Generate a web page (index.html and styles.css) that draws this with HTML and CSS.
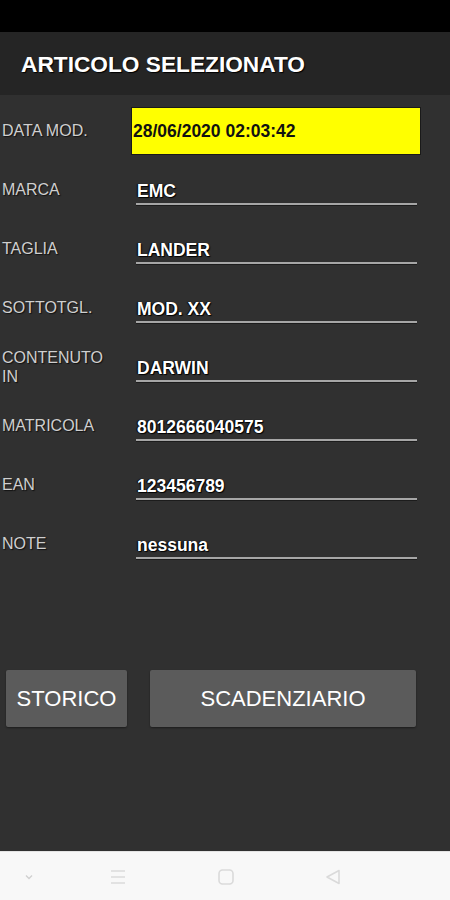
FILE: index.html
```html
<!DOCTYPE html>
<html lang="it">
<head>
    <meta charset="UTF-8">
    <title>Articolo selezionato</title>
    <link rel="stylesheet" href="styles.css">
</head>
<body>
    <div class="status-bar"></div>
    <div class="app-header">ARTICOLO SELEZIONATO</div>

    <div class="content">
        <div class="row">
            <div class="label">DATA MOD.</div>
            <div class="date-box">28/06/2020 02:03:42</div>
        </div>
        <div class="row">
            <div class="label">MARCA</div>
            <div class="field">EMC</div>
        </div>
        <div class="row">
            <div class="label">TAGLIA</div>
            <div class="field">LANDER</div>
        </div>
        <div class="row">
            <div class="label">SOTTOTGL.</div>
            <div class="field">MOD. XX</div>
        </div>
        <div class="row">
            <div class="label">CONTENUTO IN</div>
            <div class="field">DARWIN</div>
        </div>
        <div class="row">
            <div class="label">MATRICOLA</div>
            <div class="field">8012666040575</div>
        </div>
        <div class="row">
            <div class="label">EAN</div>
            <div class="field">123456789</div>
        </div>
        <div class="row">
            <div class="label">NOTE</div>
            <div class="field">nessuna</div>
        </div>

        <div class="buttons">
            <button class="btn btn-storico">STORICO</button>
            <button class="btn btn-scad">SCADENZIARIO</button>
        </div>
    </div>

    <div class="nav-bar">
        <svg class="nav-icon" width="12" height="12" viewBox="0 0 12 12">
            <path d="M3 4.5 L6 7.5 L9 4.5" fill="none" stroke="#d0d0d0" stroke-width="1.3"/>
        </svg>
        <svg class="nav-icon" width="18" height="18" viewBox="0 0 18 18">
            <path d="M2 3 H16 M2 9 H16 M2 15 H16" fill="none" stroke="#dadada" stroke-width="1.6"/>
        </svg>
        <svg class="nav-icon" width="18" height="18" viewBox="0 0 18 18">
            <rect x="2" y="2" width="14" height="14" rx="3.5" fill="none" stroke="#dadada" stroke-width="1.6"/>
        </svg>
        <svg class="nav-icon" width="18" height="18" viewBox="0 0 18 18">
            <path d="M15 2.5 L15 15.5 L3 9 Z" fill="none" stroke="#dadada" stroke-width="1.6" stroke-linejoin="round"/>
        </svg>
    </div>
</body>
</html>
```

FILE: styles.css
```css
body {
    margin: 0;
    width: 450px;
    height: 900px;
    display: flex;
    flex-direction: column;
    font-family: "Liberation Sans", Arial, sans-serif;
    background-color: #303030;
    overflow: hidden;
}
.status-bar {
    height: 32px;
    background-color: #000;
}
.app-header {
    height: 63px;
    box-sizing: border-box;
    padding: 19px 0 0 21px;
    background-color: #252525;
    color: #fff;
    font-size: 22.7px;
    font-weight: bold;
    text-shadow: 1px 1px 1px #000;
}
.content {
    flex: 1;
    padding-top: 6px;
    background-color: #303030;
}
.row {
    height: 59px;
    display: flex;
    align-items: center;
}
.label {
    width: 112px;
    padding-left: 2px;
    color: #cfcfcf;
    font-size: 16px;
    line-height: 19px;
    text-shadow: 1px 1px 1px #111;
}
.date-box {
    margin-left: 17px;
    width: 290px;
    height: 48px;
    box-sizing: border-box;
    border: 1px solid #1a1a1a;
    background-color: #ffff00;
    color: #111;
    font-size: 17.5px;
    font-weight: bold;
    line-height: 47px;
    padding-left: 1px;
}
.field {
    margin-left: 22px;
    width: 280px;
    padding: 7px 0 3px 1px;
    border-bottom: 2px solid #a6a6a6;
    box-shadow: 0 1px 0 #1c1c1c;
    color: #fff;
    font-size: 17.5px;
    font-weight: bold;
    line-height: 18px;
    text-shadow: 1px 1px 1px #000, -1px 0 1px #000;
}
.buttons {
    display: flex;
    gap: 23px;
    margin-top: 97px;
    padding-left: 6px;
}
.btn {
    height: 57px;
    border: none;
    border-radius: 2px;
    background-color: #5b5b5b;
    color: #fff;
    font-family: "Liberation Sans", Arial, sans-serif;
    font-size: 22px;
    box-shadow: 0 1px 2px rgba(0,0,0,0.4);
}
.btn-storico {
    width: 121px;
}
.btn-scad {
    width: 266px;
}
.nav-bar {
    height: 49px;
    background-color: #f8f8f8;
    border-top: 1px solid #e4e4e4;
    box-sizing: border-box;
    display: flex;
    align-items: center;
    padding-top: 2px;
}
.nav-icon:nth-child(1) {
    margin-left: 23px;
}
.nav-icon:nth-child(2) {
    margin-left: 74px;
}
.nav-icon:nth-child(3) {
    margin-left: 90px;
}
.nav-icon:nth-child(4) {
    margin-left: 89px;
}
```
